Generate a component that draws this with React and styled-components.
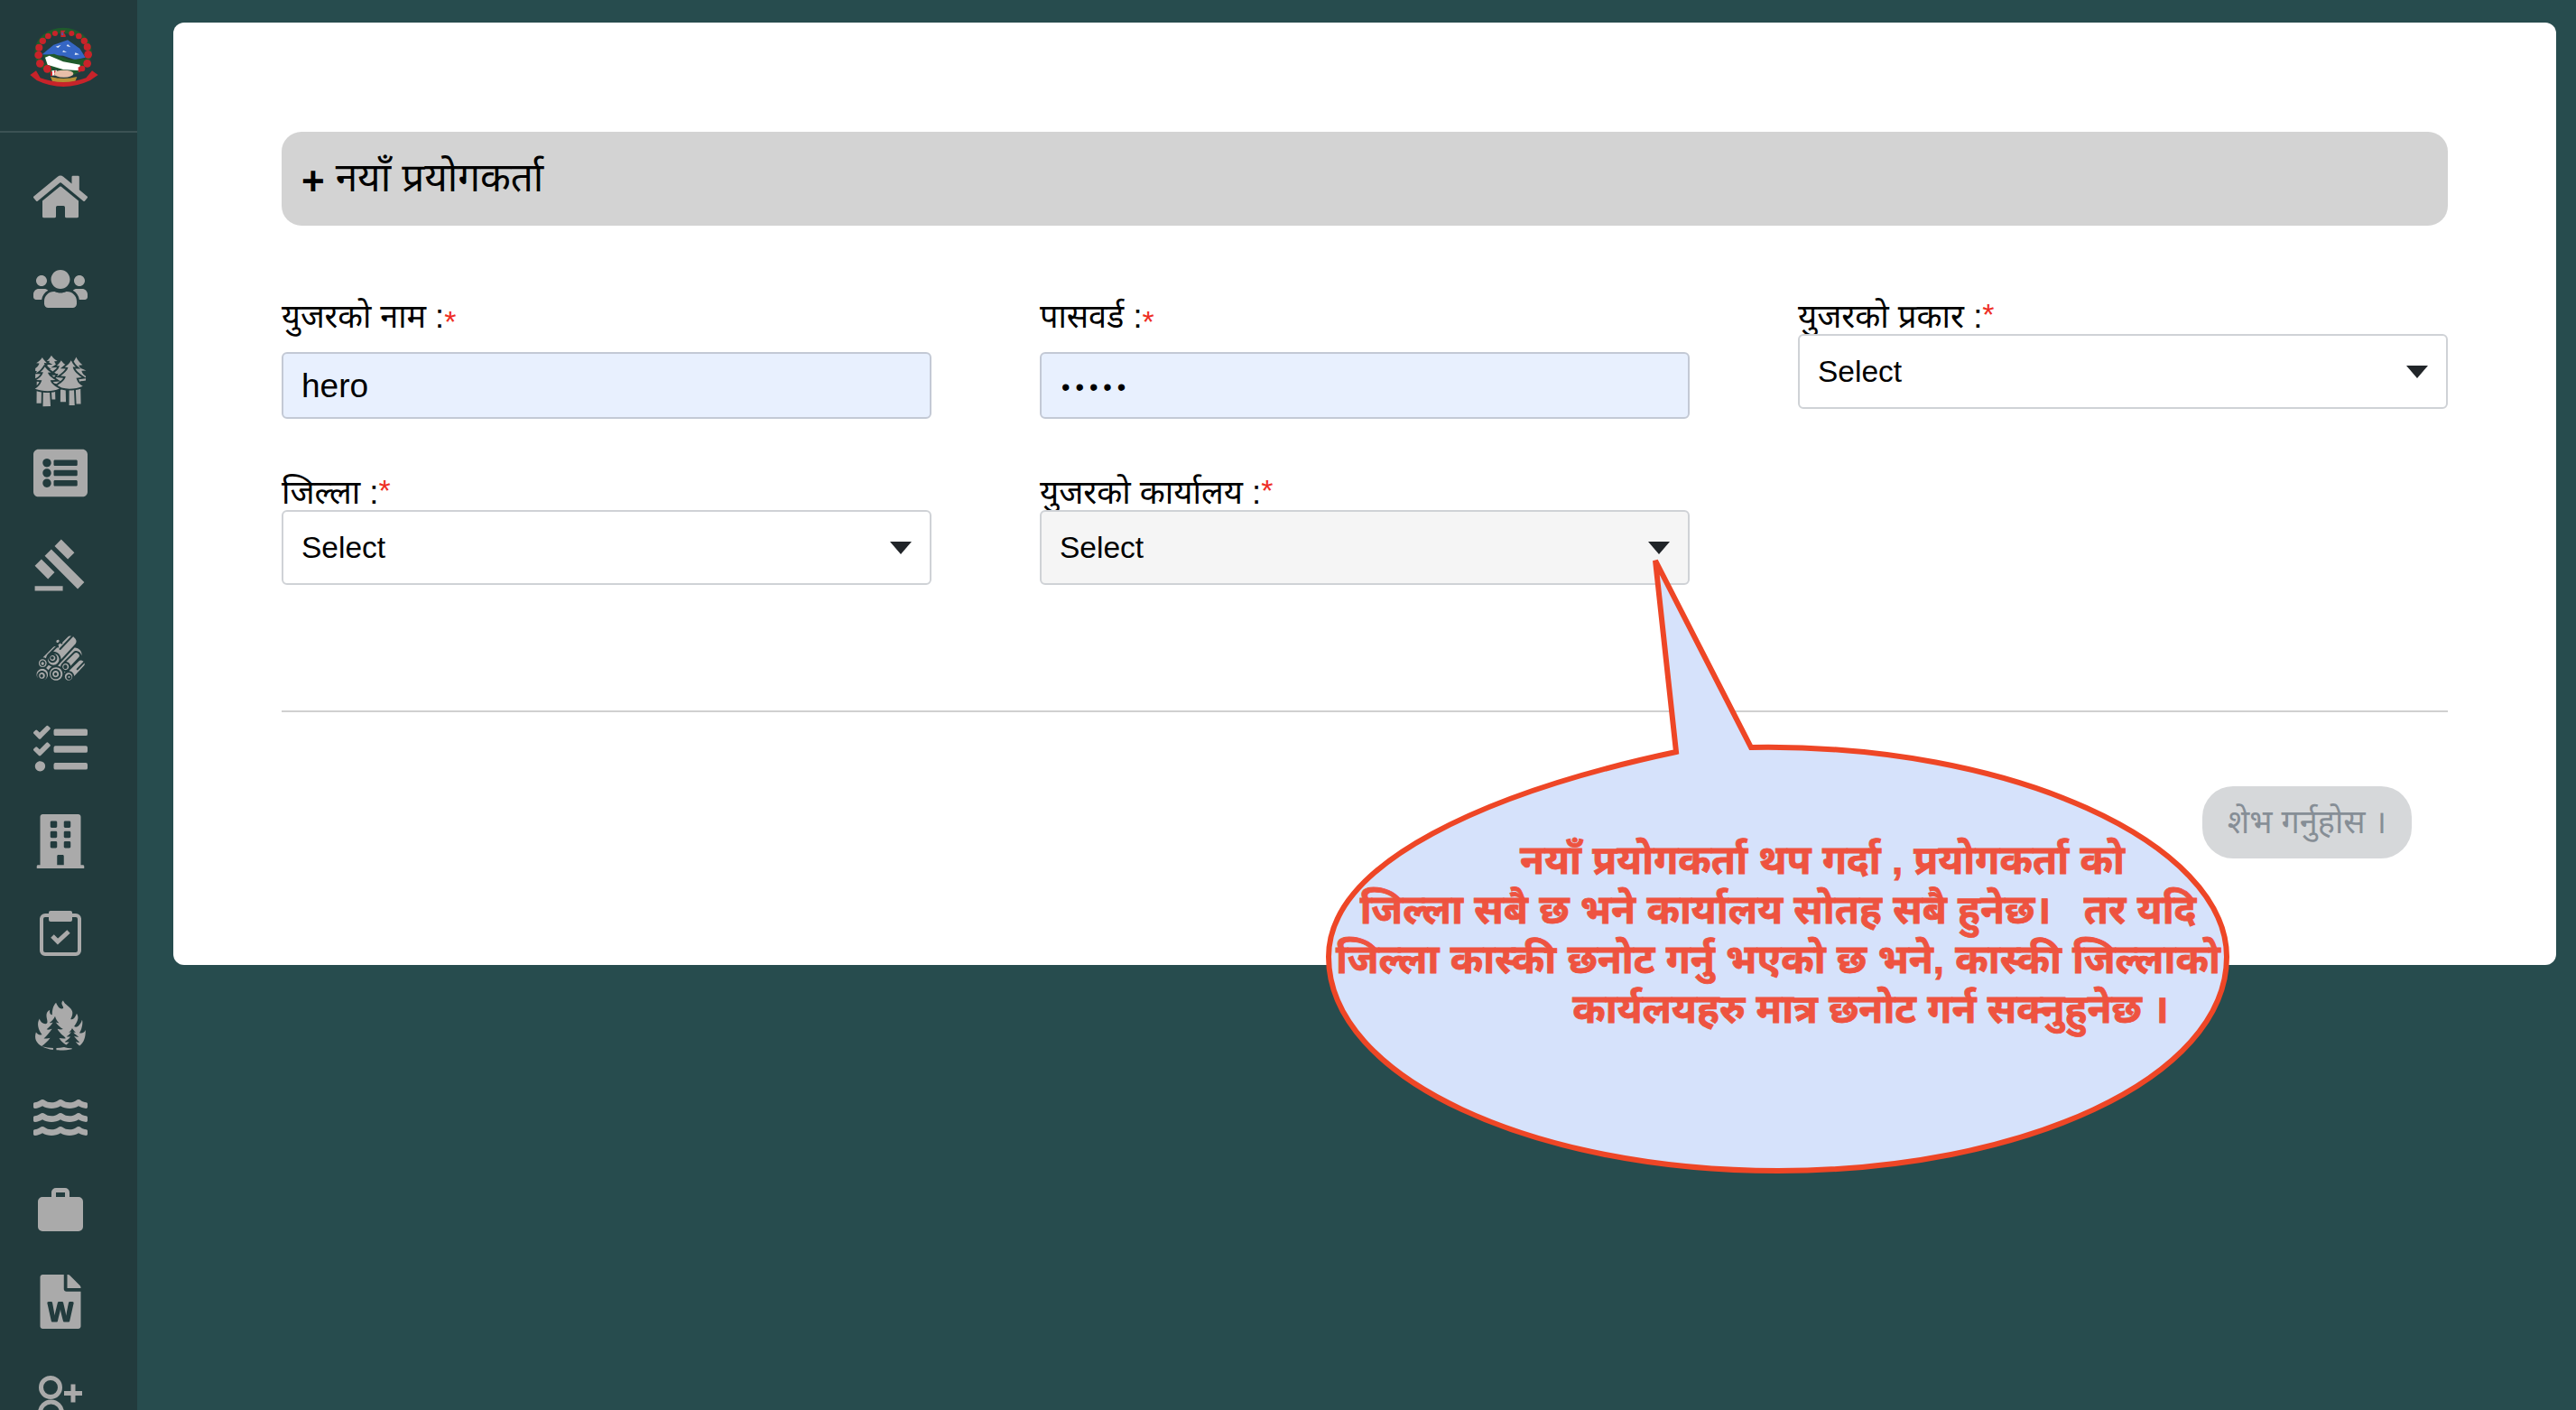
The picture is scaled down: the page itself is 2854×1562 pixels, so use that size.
import React from 'react'
import styled, { createGlobalStyle } from 'styled-components'
import { FaHome, FaUsers, FaListAlt, FaTasks, FaBuilding, FaWater, FaFileWord } from 'react-icons/fa'
import { MdGavel } from 'react-icons/md'
import { GiForest, GiWoodPile, GiBurningForest } from 'react-icons/gi'

const FONT = '"Liberation Sans", "Noto Sans Devanagari", "Lohit Devanagari", "Noto Sans", "DejaVu Sans", sans-serif'

const GlobalStyle = createGlobalStyle`
  html, body {
    margin: 0;
    height: 100%;
    overflow: hidden;
    background: #274c4e;
    font-family: ${FONT};
  }
  * { box-sizing: border-box; }
`

const Page = styled.div`
  position: relative;
  display: flex;
  align-items: flex-start;
  width: 2854px;
  height: 1562px;
  overflow: hidden;
`

const Sidebar = styled.aside`
  flex: 0 0 152px;
  height: 1562px;
  background: #223b3d;
`

const LogoBox = styled.div`
  height: 147px;
  border-bottom: 2px solid #3b5254;
  padding: 21px 0 0 20px;
`

const NavList = styled.nav`
  display: flex;
  flex-direction: column;
  padding-top: 20px;
`

const NavItem = styled.a`
  display: flex;
  align-items: center;
  justify-content: center;
  width: 134px;
  height: 102px;
  flex: none;
  color: #aaaaaa;
`

const Card = styled.main`
  flex: 1;
  height: 1044px;
  margin: 25px 22px 0 40px;
  padding: 121px 120px 0;
  background: #fff;
  border-radius: 12px;
`

const Heading = styled.h1`
  display: flex;
  align-items: center;
  gap: 12px;
  height: 104px;
  margin: 0 0 82px;
  padding: 5px 22px 0;
  background: #d3d3d3;
  border-radius: 22px;
  font-size: 44px;
  font-weight: 400;
  color: #000;
`

const Plus = styled.span`
  font-weight: 700;
`

const FormGrid = styled.div`
  display: grid;
  grid-template-columns: repeat(3, 720px);
  column-gap: 120px;
  row-gap: 63px;
`

const Field = styled.div`
  display: flex;
  flex-direction: column;
  align-items: stretch;
`

const Label = styled.label`
  display: block;
  height: ${p => (p.$tall ? 58 : 38)}px;
  font-size: ${p => (p.$tall ? 36 : 36.5)}px;
  line-height: 38px;
  color: #000;
  white-space: nowrap;
`

const Star = styled.span`
  color: #ee2e24;
  font-size: 34px;
  position: relative;
  top: ${p => (p.$low ? 5 : -3)}px;
`

const TextInput = styled.input`
  width: 100%;
  height: 74px;
  padding: ${p => (p.$masked ? '5px 22px 0' : '2px 20px 0')};
  background: #e8f0fe;
  border: 2px solid #c3c9d5;
  border-radius: 6px;
  font-family: ${FONT};
  font-size: ${p => (p.$masked ? 27 : 37)}px;
  letter-spacing: ${p => (p.$masked ? 6 : 0)}px;
  color: #000;
  outline: none;
`

const SelectBox = styled.div`
  display: flex;
  align-items: center;
  justify-content: space-between;
  height: 83px;
  padding: 0 20px;
  background: ${p => (p.$disabled ? '#f5f5f5' : '#fff')};
  border: 2px solid #cfd2d6;
  border-radius: 6px;
  font-size: 33.5px;
  color: #000;
`

const Caret = styled.span`
  width: 0;
  height: 0;
  border-left: 12px solid transparent;
  border-right: 12px solid transparent;
  border-top: 14px solid #212529;
`

const Divider = styled.hr`
  margin: 139px 0 82px;
  border: 0;
  border-top: 2px solid #d0d0d0;
`

const Actions = styled.div`
  display: flex;
  justify-content: flex-end;
  padding-right: 40px;
`

const SaveButton = styled.button`
  width: 232px;
  height: 80px;
  padding: 5px 0 0;
  background: #d6d8da;
  border: 0;
  border-radius: 34px;
  font-family: ${FONT};
  font-size: 36px;
  color: #868e96;
`

const Callout = styled.div`
  position: absolute;
  left: 1460px;
  top: 615px;
  width: 1020px;
  height: 690px;
`

const CalloutShape = styled.svg`
  display: block;
`

const CalloutText = styled.div`
  position: absolute;
  left: 0;
  top: 310px;
  width: 1020px;
  font-size: 44px;
  line-height: 55px;
  font-weight: 700;
  color: #ee5340;
  -webkit-text-stroke: 0.8px #ee5340;
`

const CalloutLine = styled.div`
  padding-left: ${p => p.$shift || 0}px;
  text-align: center;
  white-space: pre;
`

const EmblemSvg = styled.svg`
  display: block;
  filter: blur(0.4px);
`

const FLOWERS = [
  [123, 48, 9], [100, 57, 10], [82, 73, 11], [70, 95, 12], [68, 120, 13], [73, 148, 13], [97, 166, 13],
  [178, 48, 9], [202, 57, 10], [220, 73, 11], [230, 93, 12], [233, 118, 13], [230, 148, 13], [213, 165, 10],
]

const Emblem = () => (
  <EmblemSvg width="100" height="90" viewBox="0 0 300 270">
    <ellipse cx="150" cy="110" rx="86" ry="72" fill="none" stroke="#1f5a2c" strokeWidth="18" />
    <path d="M80 118 L118 86 L165 70 L205 98 L224 128 L190 136 L150 122 L105 120z" fill="#3566c4" />
    <path d="M125 92l18-6-10 10zM165 84l10 10-14-4zM190 112l14 6-16 2zM150 104l12 6-14 0z" fill="#dfe8f7" />
    <path d="M84 120 L120 116 L170 136 L222 132 L214 162 L150 172 L96 160z" fill="#1f5a2c" />
    <path d="M90 128 L104 122 L150 142 L206 152 L206 172 L150 168 L98 152z" fill="#fff" />
    <g fill="#c8232a">
      {FLOWERS.map(([x, y, r]) => <circle key={x + '-' + y} cx={x} cy={y} r={r} />)}
    </g>
    <path d="M142 38h16l-6 8 6 8v6h-16z" fill="#c8232a" />
    <path d="M145 44h5l-2 4 3 6h-6z" fill="#3566c4" />
    <path d="M112 172 L128 170 L130 186 L114 188z" fill="#fff" />
    <path d="M108 175h6v14h-6zM120 172h5v14h-5zM200 160h8v16h-8z" fill="#c8232a" />
    <ellipse cx="152" cy="182" rx="32" ry="12" fill="#e8bfa8" />
    <path d="M108 192 Q150 204 196 192 L190 208 Q150 218 114 208z" fill="#b79035" />
    <path d="M40 186 L60 172 L74 196 Q150 224 226 196 L246 172 L266 186 L240 204 Q150 246 62 204z" fill="#c8232a" />
  </EmblemSvg>
)

const ClipboardCheck = () => (
  <svg width="46" height="50" viewBox="0 0 46 50" fill="none">
    <rect x="2" y="5" width="42" height="43" rx="4" stroke="currentColor" strokeWidth="4" />
    <rect x="10" y="0" width="26" height="12" rx="2" fill="currentColor" />
    <path d="M14 28l6 6 12-11" stroke="currentColor" strokeWidth="5" />
  </svg>
)

const Briefcase = () => (
  <svg width="50" height="48" viewBox="0 0 50 48">
    <path fill="currentColor" d="M15 10V5a5 5 0 0 1 5-5h10a5 5 0 0 1 5 5v5h10a5 5 0 0 1 5 5v28a5 5 0 0 1-5 5H5a5 5 0 0 1-5-5V15a5 5 0 0 1 5-5zM20 5v5h10V5z" fillRule="evenodd" />
  </svg>
)

const UserPlusOutline = () => (
  <svg width="50" height="80" viewBox="0 0 50 80" fill="none" stroke="currentColor" strokeWidth="5">
    <g transform="translate(0 20)">
      <circle cx="14" cy="13" r="10.5" />
      <path d="M2.5 50V41A12 12 0 0 1 26.5 41V50" />
      <path d="M39 9.5v20M29 19.5h20" />
    </g>
  </svg>
)

const NAV = [
  <FaHome size={60} key="a" />,
  <FaUsers size={60} key="b" />,
  <GiForest size={60} key="c" />,
  <FaListAlt size={60} key="d" />,
  <MdGavel size={62} key="e" />,
  <GiWoodPile size={58} key="f" />,
  <FaTasks size={60} key="g" />,
  <FaBuilding size={60} key="h" />,
  <ClipboardCheck key="i" />,
  <GiBurningForest size={60} key="j" />,
  <FaWater size={60} key="k" />,
  <Briefcase key="l" />,
  <FaFileWord size={60} key="m" />,
  <UserPlusOutline key="n" />,
]

const App = () => {
  return (
    <Page>
      <GlobalStyle />
      <Sidebar>
        <LogoBox><Emblem /></LogoBox>
        <NavList>
          {NAV.map((icon, i) => <NavItem key={i}>{icon}</NavItem>)}
        </NavList>
      </Sidebar>
      <Card>
        <Heading><Plus>+</Plus> नयाँ प्रयोगकर्ता</Heading>
        <FormGrid>
          <Field>
            <Label $tall>युजरको नाम :<Star $low>*</Star></Label>
            <TextInput readOnly value="hero" />
          </Field>
          <Field>
            <Label $tall>पासवर्ड :<Star $low>*</Star></Label>
            <TextInput $masked readOnly type="password" value="12345" />
          </Field>
          <Field>
            <Label>युजरको प्रकार :<Star>*</Star></Label>
            <SelectBox>Select<Caret /></SelectBox>
          </Field>
          <Field>
            <Label>जिल्ला :<Star>*</Star></Label>
            <SelectBox>Select<Caret /></SelectBox>
          </Field>
          <Field>
            <Label>युजरको कार्यालय :<Star>*</Star></Label>
            <SelectBox $disabled>Select<Caret /></SelectBox>
          </Field>
        </FormGrid>
        <Divider />
        <Actions>
          <SaveButton>शेभ गर्नुहोस ।</SaveButton>
        </Actions>
      </Card>
      <Callout>
        <CalloutShape width="1020" height="690" viewBox="0 0 1020 690">
          <path
            d="M374 6 L397 218 C190 262 12 340 12 445 C12 580 240 682 510 682 C780 682 1007 580 1007 445 C1007 320 770 208 480 213 Z"
            fill="#d6e2fb"
            stroke="#ee4626"
            strokeWidth="6"
          />
        </CalloutShape>
        <CalloutText>
          <CalloutLine $shift={98}>नयाँ प्रयोगकर्ता थप गर्दा , प्रयोगकर्ता को</CalloutLine>
          <CalloutLine>जिल्ला सबै छ भने कार्यालय सोतह सबै हुनेछ।   तर यदि</CalloutLine>
          <CalloutLine>जिल्ला कास्की छनोट गर्नु भएको छ भने, कास्की जिल्लाको</CalloutLine>
          <CalloutLine $shift={205}>कार्यलयहरु मात्र छनोट गर्न सक्नुहुनेछ ।</CalloutLine>
        </CalloutText>
      </Callout>
    </Page>
  )
}

export default App
